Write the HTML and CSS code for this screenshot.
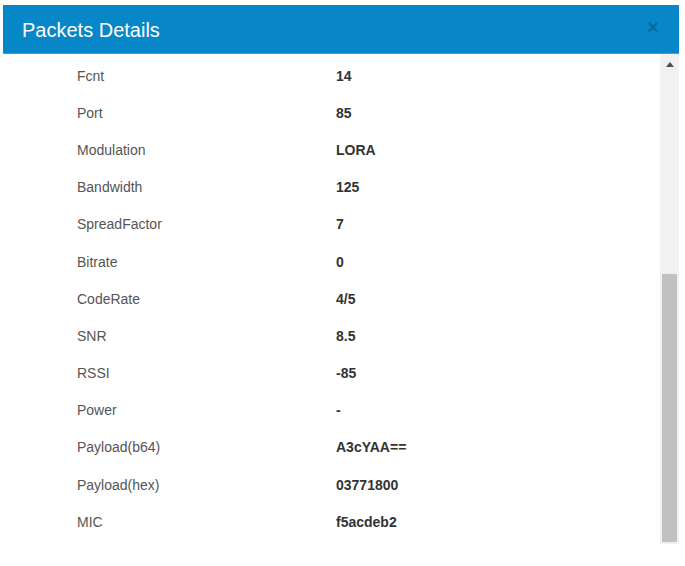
FILE: index.html
```html
<!DOCTYPE html>
<html lang="en">
<head>
    <meta charset="UTF-8">
    <title>Packets Details</title>
    <link rel="stylesheet" href="styles.css">
</head>
<body>
    <div class="modal">
        <div class="modal-header">
            <h4 class="modal-title">Packets Details</h4>
            <button class="close" type="button">&times;</button>
        </div>

        <div class="modal-body">
            <div class="details">
                <div class="row"><span class="label">Fcnt</span><span class="value">14</span></div>
                <div class="row"><span class="label">Port</span><span class="value">85</span></div>
                <div class="row"><span class="label">Modulation</span><span class="value">LORA</span></div>
                <div class="row"><span class="label">Bandwidth</span><span class="value">125</span></div>
                <div class="row"><span class="label">SpreadFactor</span><span class="value">7</span></div>
                <div class="row"><span class="label">Bitrate</span><span class="value">0</span></div>
                <div class="row"><span class="label">CodeRate</span><span class="value">4/5</span></div>
                <div class="row"><span class="label">SNR</span><span class="value">8.5</span></div>
                <div class="row"><span class="label">RSSI</span><span class="value">-85</span></div>
                <div class="row"><span class="label">Power</span><span class="value">-</span></div>
                <div class="row"><span class="label">Payload(b64)</span><span class="value">A3cYAA==</span></div>
                <div class="row"><span class="label">Payload(hex)</span><span class="value">03771800</span></div>
                <div class="row"><span class="label">MIC</span><span class="value">f5acdeb2</span></div>
            </div>

            <!-- scrollbar drawn by hand so it looks like the screenshot -->
            <div class="scrollbar">
                <div class="arrow-up"></div>
                <div class="thumb"></div>
            </div>
        </div>
    </div>
</body>
</html>
```

FILE: styles.css
```css
:root {
    --header-bg: #0787c7;
    --label-color: #555;
    --value-color: #333;
    --track-color: #f1f1f1;
    --thumb-color: #c1c1c1;
}

body {
    margin: 0;
    background: #fff;
    font-family: "Liberation Sans", Arial, sans-serif;
}

.modal {
    margin: 5px 0 0 3px;
    width: 676px;
}

.modal-header {
    display: flex;
    align-items: center;
    justify-content: space-between;
    height: 48px;
    padding: 0 20px 0 19px;
    background: var(--header-bg);
    border-bottom: 1px solid #3f9fd3;
}

.modal-title {
    margin: 0;
    padding-top: 2px;
    color: #fff;
    font-size: 20px;
    font-weight: normal;
}

.close {
    padding: 0;
    margin-top: -4px;
    border: 0;
    background: none;
    color: #000;
    opacity: 0.2;
    font-family: inherit;
    font-size: 20px;
    font-weight: bold;
    line-height: 1;
}

.modal-body {
    display: flex;
    height: 490px;
}

.details {
    flex: 1;
    padding: 3px 0 0 74px;
}

.row {
    display: grid;
    grid-template-columns: 259px 1fr;
    align-items: center;
    height: 37.2px;
    font-size: 14px;
}

.label {
    color: var(--label-color);
}

.value {
    color: var(--value-color);
    font-weight: bold;
}

.scrollbar {
    display: flex;
    flex-direction: column;
    width: 19px;
    background: var(--track-color);
}

.arrow-up {
    width: 0;
    height: 0;
    margin: 8px auto 0;
    border-left: 4px solid transparent;
    border-right: 4px solid transparent;
    border-bottom: 5px solid #505050;
}

.thumb {
    margin: 207px 2px 0 2px;
    height: 268px;
    background: var(--thumb-color);
}
```
